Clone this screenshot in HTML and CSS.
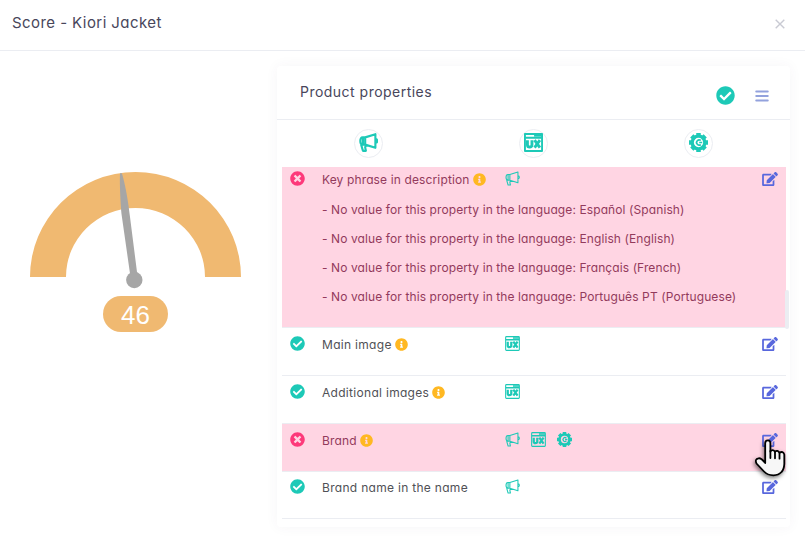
FILE: index.html
```html
<!DOCTYPE html>
<html lang="en">
<head>
<meta charset="utf-8">
<title>Score - Kiori Jacket</title>
<link rel="stylesheet" href="styles.css">
</head>
<body>
<svg class="sprite" aria-hidden="true">
  <symbol id="check" viewBox="0 0 512 512"><path d="M504 256c0 136.967-111.033 248-248 248S8 392.967 8 256 119.033 8 256 8s248 111.033 248 248zM227.314 387.314l184-184c6.248-6.248 6.248-16.379 0-22.627l-22.627-22.627c-6.248-6.249-16.379-6.249-22.628 0L216 308.118l-70.059-70.059c-6.248-6.248-16.379-6.248-22.628 0l-22.627 22.627c-6.248 6.248-6.248 16.379 0 22.627l104 104c6.249 6.249 16.379 6.249 22.628.001z"/></symbol>
  <symbol id="times" viewBox="0 0 512 512"><path d="M256 8C119 8 8 119 8 256s111 248 248 248 248-111 248-248S393 8 256 8zm121.600 313.100c4.700 4.700 4.700 12.300 0 17L338 377.600c-4.700 4.700-12.300 4.700-17 0L256 312l-65.100 65.600c-4.700 4.700-12.300 4.700-17 0L134.400 338c-4.700-4.700-4.700-12.300 0-17l65.600-65-65.600-65.100c-4.700-4.700-4.700-12.300 0-17l39.600-39.600c4.700-4.700 12.300-4.700 17 0l65 65.700 65.100-65.600c4.700-4.700 12.300-4.700 17 0l39.600 39.600c4.700 4.700 4.700 12.300 0 17L312 256l65.600 65.100z"/></symbol>
  <symbol id="info" viewBox="0 0 512 512"><path d="M256 8C119.043 8 8 119.083 8 256c0 136.997 111.043 248 248 248s248-111.003 248-248C504 119.083 392.957 8 256 8zm0 110c23.196 0 42 18.804 42 42s-18.804 42-42 42-42-18.804-42-42 18.804-42 42-42zm56 254c0 6.627-5.373 12-12 12h-88c-6.627 0-12-5.373-12-12v-24c0-6.627 5.373-12 12-12h12v-64h-12c-6.627 0-12-5.373-12-12v-24c0-6.627 5.373-12 12-12h64c6.627 0 12 5.373 12 12v100h12c6.627 0 12 5.373 12 12v24z"/></symbol>
  <symbol id="edit" viewBox="0 0 576 512"><path d="M402.600 83.200l90.200 90.200c3.800 3.800 3.800 10 0 13.800L274.400 405.600l-92.800 10.300c-12.400 1.400-22.900-9.100-21.500-21.500l10.300-92.800L388.800 83.200c3.800-3.800 10-3.800 13.800 0zm162-22.900l-48.800-48.800c-15.200-15.200-39.900-15.200-55.200 0l-35.400 35.400c-3.800 3.800-3.800 10 0 13.800l90.200 90.200c3.800 3.800 10 3.800 13.800 0l35.400-35.400c15.200-15.300 15.200-40 0-55.200zM384 346.200V448H64V128h229.800c3.200 0 6.200-1.300 8.500-3.500l40-40c7.600-7.600 2.200-20.500-8.500-20.500H48C21.500 64 0 85.500 0 112v352c0 26.500 21.500 48 48 48h352c26.500 0 48-21.500 48-48V306.200c0-10.700-12.900-16-20.500-8.500l-40 40c-2.200 2.300-3.500 5.300-3.500 8.500z"/></symbol>
  <symbol id="horn" viewBox="0 0 16 16"><g fill="none" stroke="currentColor" stroke-linejoin="round"><path d="M5.200 3.700 13.800 1v11.500L5.200 9.800M5.200 3.700H3.100Q1.100 3.700 1.100 6.700t2 3.100h2.100zM3.300 3.900v5.800M1.800 9.800l1.500 5.200h2.500l-.6-2.900.6-2M14 5.200q1.300 0 1.300 1.500T14 8.200"/></g></symbol>
  <symbol id="ux" viewBox="0 0 16 16"><g fill="none" stroke="currentColor"><rect x=".7" y=".7" width="14.600" height="14.600" rx=".8"/><path stroke-width="1.600" d="M8.500 2.200H15M1 4h14"/><path class="ux-letters" d="M2.900 6v4q0 1.800 1.900 1.800T6.700 10V6M8.900 6l4.500 6.300M13.400 6l-4.500 6.300"/></g></symbol>
  <symbol id="gear" viewBox="0 0 16 16"><circle cx="8" cy="8" r="5.300" fill="none" stroke="currentColor" stroke-width="2.800"/><path fill="none" stroke="currentColor" stroke-width="3.800" d="M8 0v3M8 13v3M0 8h3M13 8h3M2.350 2.350l2 2M11.650 11.650l2 2M2.350 13.650l2-2M11.650 4.350l2-2"/><path fill="none" stroke="currentColor" stroke-width="1.400" d="M10 6.300A2.200 2.200 0 1 0 10 9.700M8.600 8h2.500"/></symbol>
</svg>

<header class="title-bar">
  <h1>Score - Kiori Jacket</h1>
  <svg class="close" viewBox="0 0 10 10"><path d="M.7.7 9.300 9.300M9.300.7.7 9.300"/></svg>
</header>

<main class="content">
  <section class="score">
    <svg class="gauge" viewBox="0 0 212 118">
      <path class="arc" d="M0 105A105.500 105 0 0 1 211 105H175A69.500 69 0 0 0 36 105Z"/>
      <path class="needle" d="M90 1.500Q91 .5 92 1.500C96 15 98.500 32 100 45L107.500 104 100.500 105 91.500 42C90.500 30 89.500 12 90 1.500Z"/>
      <circle class="needle" cx="104.300" cy="108" r="8.200"/>
    </svg>
    <div class="score-value">46</div>
  </section>

  <section class="card">
    <div class="card-head">
      <h2>Product properties</h2>
      <svg class="all-ok"><use href="#check"/></svg>
      <svg class="menu" viewBox="0 0 14 12"><path d="M1.200 1.500h11.600M1.200 6h11.600M1.200 10.500h11.600"/></svg>
    </div>
    <div class="filters">
      <span class="filter"><svg><use href="#horn"/></svg></span>
      <span class="filter"><svg><use href="#ux"/></svg></span>
      <span class="filter"><svg><use href="#gear"/></svg></span>
    </div>
    <div class="list">
      <div class="row bad first">
        <svg class="status"><use href="#times"/></svg>
        <div class="name tight">Key phrase in description<svg class="info"><use href="#info"/></svg></div>
        <div class="tags"><svg><use href="#horn"/></svg></div>
        <svg class="edit"><use href="#edit"/></svg>
        <ul class="notes">
          <li>- No value for this property in the language: Español (Spanish)</li>
          <li>- No value for this property in the language: English (English)</li>
          <li>- No value for this property in the language: Français (French)</li>
          <li>- No value for this property in the language: Português PT (Portuguese)</li>
        </ul>
      </div>
      <div class="row">
        <svg class="status"><use href="#check"/></svg>
        <div class="name">Main image<svg class="info"><use href="#info"/></svg></div>
        <div class="tags"><svg><use href="#ux"/></svg></div>
        <svg class="edit"><use href="#edit"/></svg>
      </div>
      <div class="row">
        <svg class="status"><use href="#check"/></svg>
        <div class="name">Additional images<svg class="info"><use href="#info"/></svg></div>
        <div class="tags"><svg><use href="#ux"/></svg></div>
        <svg class="edit"><use href="#edit"/></svg>
      </div>
      <div class="row bad">
        <svg class="status"><use href="#times"/></svg>
        <div class="name tight">Brand<svg class="info"><use href="#info"/></svg></div>
        <div class="tags"><svg><use href="#horn"/></svg><svg><use href="#ux"/></svg><svg><use href="#gear"/></svg></div>
        <svg class="edit"><use href="#edit"/></svg>
      </div>
      <div class="row last">
        <svg class="status"><use href="#check"/></svg>
        <div class="name">Brand name in the name</div>
        <div class="tags"><svg><use href="#horn"/></svg></div>
        <svg class="edit"><use href="#edit"/></svg>
      </div>
      <span class="scroll-thumb"></span>
    </div>
  </section>
</main>

<svg class="cursor" viewBox="0 0 32 38"><path d="M10.200 21V4.200Q10.200 1.300 12.800 1.300T15.400 4.200V12.500Q17.500 9.800 20 12.700 22.500 10.700 24.500 13.700 28 11.700 29.300 15.500V25Q29 30.500 26.500 33 23.500 36.300 18.500 36.300 12.500 36.300 9 32.500L1.500 24.500Q-.5 20 3.500 19.300 6 18.700 10.200 24Z"/><path class="knuckles" d="M15.400 12v7M20 12.800v6.500M24.500 13.700v6"/></svg>
</body>
</html>
```
FILE: styles.css
```css
* { box-sizing: border-box; }
body { margin: 0; height: 559px; overflow: hidden; position: relative; background: #fff; color: #505156; font: 400 12px/18px Inter, "Liberation Sans", sans-serif; font-feature-settings: "cv11"; }
svg { display: block; fill: currentColor; flex: none; }
h1, h2 { margin: 0; font-weight: 400; color: #48465b; white-space: nowrap; }
.sprite { position: absolute; width: 0; height: 0; }
.ux-letters { stroke-width: 2.400; }

.title-bar { height: 51px; border-bottom: 1px solid #ebedf2; display: flex; justify-content: space-between; padding: 13px 20px 0 12px; }
h1 { font-size: 15px; line-height: 20px; letter-spacing: .43px; }
.close { width: 10px; height: 10px; margin-top: 6px; stroke: #c9cad3; stroke-width: 1.400; }

.content { display: flex; }
.score { width: 277px; padding: 121px 0 0 30px; }
.gauge { width: 212px; height: 118px; }
.arc { fill: #f0b971; }
.needle { fill: #a6a6a6; }
.score-value { width: 65px; height: 36px; margin: 6px 0 0 73px; border-radius: 18px; background: #f0b971; color: #fff; font: 26px/38px "Liberation Sans", sans-serif; text-align: center; }

.card { width: 513px; height: 461px; margin-top: 15px; border-radius: 4px; background: #fff; box-shadow: 0 0 13px rgba(82, 63, 105, .05); }
.card-head { height: 54px; border-bottom: 1px solid #ebedf2; display: flex; padding: 0 21px 0 23px; }
h2 { flex: 1; font-size: 14px; line-height: 20px; padding-top: 16px; letter-spacing: .48px; }
.all-ok { width: 19px; height: 19px; margin: 20px 20px 0 0; color: #1dc9b7; }
.menu { width: 14px; height: 12px; margin-top: 24px; stroke: #93a2dd; stroke-width: 1.900; stroke-linecap: round; }
.filters { height: 47px; padding: 9px 9px 0; display: grid; grid-template-columns: repeat(3, 165px); justify-items: center; color: #1dc9b7; }
.filter { width: 29px; height: 29px; border: 1px solid #ebedf2; border-radius: 50%; display: flex; justify-content: center; padding-top: 3px; }
.filter svg { width: 19px; height: 19px; stroke-width: 1.800; }

.list { position: relative; margin: 0 4px 0 5px; }
.row { height: 48px; border-bottom: 1px solid #ebedf2; display: grid; grid-template-columns: 40px 183px 1fr 17px; align-content: start; padding: 8px 8px 0 0; }
.row.first { height: 161px; padding-top: 4px; }
.row.last { height: 47px; padding-top: 7px; }
.bad { background: #ffd5e3; color: #933a5c; }
.status { width: 15px; height: 15px; margin: 0 0 0 8px; color: #1dc9b7; }
.bad .status { color: #fd397a; }
.name { display: flex; letter-spacing: .3px; white-space: nowrap; }
.name.tight { letter-spacing: .13px; }
.info { width: 13px; height: 13px; margin: 2px 0 0 3px; color: #ffb822; }
.tags { display: flex; gap: 11px; color: #1dc9b7; }
.tags svg { width: 15px; height: 15px; stroke-width: 1.150; }
.tags .ux-letters { stroke-width: 1.700; }
.edit { width: 16px; height: 14px; margin: .5px 0 0 .5px; color: #5867dd; }
.notes { grid-column: 2 / -1; list-style: none; margin: 6px 0 0; padding: 0; line-height: 29px; letter-spacing: .1px; white-space: nowrap; }
.scroll-thumb { position: absolute; right: -3px; top: 123px; width: 4px; height: 39px; border-radius: 2px; background: #ebedf2; }

.cursor { position: absolute; left: 755px; top: 439px; width: 32px; height: 38px; fill: #f7f7f7; stroke: #000; stroke-width: 1.800; stroke-linejoin: round; filter: drop-shadow(-1px 2px 2px rgba(0, 0, 0, .5)); }
.knuckles { fill: none; stroke-linecap: round; }
```
